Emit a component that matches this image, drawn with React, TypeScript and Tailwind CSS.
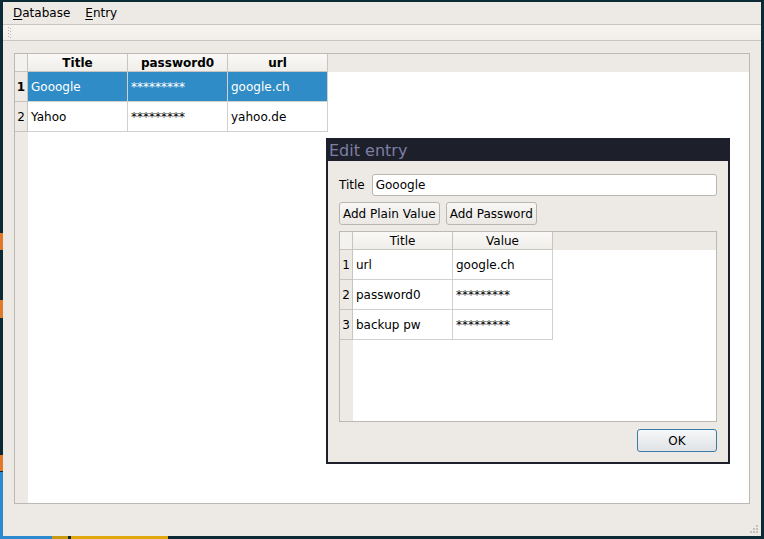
import React from "react";

const font = { fontFamily: '"DejaVu Sans", "Liberation Sans", sans-serif' };

type Col = { title: string; w: string };

function Grid({
  cols,
  rows,
  selected,
  boldHeader,
  className,
}: {
  cols: Col[];
  rows: string[][];
  selected?: number;
  boldHeader?: boolean;
  className?: string;
}) {
  return (
    <div className={`flex flex-col border border-[#bcb8b3] bg-white overflow-hidden ${className ?? ""}`}>
      {/* header row */}
      <div className="flex h-[18px] bg-[#edeae5] shrink-0">
        <div className="w-[13px] border-r border-b border-[#c8c4bf] bg-[#f4f2ef]" />
        {cols.map((c) => (
          <div
            key={c.title}
            className={`${c.w} flex items-center justify-center border-r border-b border-[#c8c4bf] bg-gradient-to-b from-[#faf9f7] to-[#f0eeea] ${
              boldHeader ? "font-bold" : ""
            }`}
          >
            {c.title}
          </div>
        ))}
      </div>
      {rows.map((r, i) => {
        const sel = selected === i;
        return (
          <div key={i} className="flex h-[30px] shrink-0">
            <div
              className={`w-[13px] flex items-center justify-center border-r border-b border-[#c8c4bf] bg-[#edeae5] ${
                sel ? "font-bold" : ""
              }`}
            >
              {i + 1}
            </div>
            {r.map((cell, j) => {
              const pw = cell.startsWith("*");
              return (
                <div
                  key={j}
                  className={`${cols[j].w} flex items-center pl-[3px] border-r border-b border-[#d0d0d0] ${
                    sel ? "bg-[#308cc6] text-white" : "text-black"
                  } ${pw ? (sel ? "text-[#c4dcef]" : "text-[#5a5a5a]") : ""}`}
                >
                  {cell}
                </div>
              );
            })}
          </div>
        );
      })}
      <div className="flex flex-1">
        <div className="w-[13px] bg-[#edeae5]" />
        <div className="flex-1 bg-white" />
      </div>
    </div>
  );
}

export default function App() {
  return (
    <div className="relative w-[764px] h-[539px] bg-[#0c2a35] overflow-hidden text-[12px] text-black" style={font}>
      {/* desktop bits peeking behind window */}
      <div className="absolute left-0 top-[233px] w-[3px] h-[17px] bg-[#e07a2a]" />
      <div className="absolute left-0 top-[300px] w-[3px] h-[18px] bg-[#e07a2a]" />
      <div className="absolute left-0 top-[455px] w-[3px] h-[16px] bg-[#e07a2a]" />
      <div className="absolute left-0 top-[472px] w-[3px] h-[67px] bg-[#2c8ad0]" />
      <div className="absolute left-0 top-[536px] w-[52px] h-[3px] bg-[#2c8ad0]" />
      <div className="absolute left-[52px] top-[536px] w-[16px] h-[3px] bg-[#c89a10]" />
      <div className="absolute left-[71px] top-[536px] w-[97px] h-[3px] bg-[#e0a80c]" />

      {/* main window */}
      <div className="ml-[3px] mr-[3px] mt-[2px] h-[534px] flex flex-col bg-[#edeae5]">
        {/* menu bar */}
        <div className="h-[22px] flex items-center gap-[15px] px-[10px] shrink-0">
          <span>
            <span className="underline underline-offset-2">D</span>atabase
          </span>
          <span>
            <span className="underline underline-offset-2">E</span>ntry
          </span>
        </div>
        {/* toolbar */}
        <div className="h-[17px] shrink-0 border-t border-b border-[#c9c5bf] bg-gradient-to-b from-[#f7f4f0] to-[#f2efeb] flex items-center pl-[5px]">
          <div className="flex gap-[1px]">
            <div className="flex flex-col gap-[2px]">
              {[0, 1, 2, 3].map((i) => (
                <div key={i} className="w-[1px] h-[1px] bg-[#b8b4ae]" />
              ))}
            </div>
            <div className="flex flex-col gap-[2px] mt-[1px]">
              {[0, 1, 2, 3].map((i) => (
                <div key={i} className="w-[1px] h-[1px] bg-[#b8b4ae]" />
              ))}
            </div>
          </div>
        </div>
        {/* central widget */}
        <div className="flex-1 pt-[12px] px-[11px] pb-[10px] flex flex-col">
          <Grid
            className="flex-1"
            boldHeader
            cols={[
              { title: "Title", w: "w-[100px]" },
              { title: "password0", w: "w-[100px]" },
              { title: "url", w: "w-[100px]" },
            ]}
            rows={[
              ["Gooogle", "*********", "google.ch"],
              ["Yahoo", "*********", "yahoo.de"],
            ]}
            selected={0}
          />
        </div>
        {/* status bar */}
        <div className="h-[22px] shrink-0 flex justify-end items-end pr-[3px] pb-[3px]">
          <div className="grid grid-cols-3 gap-[1px] w-[8px] h-[8px]">
            {[0, 0, 1, 0, 1, 1, 1, 1, 1].map((v, i) => (
              <div key={i} className={`w-[2px] h-[2px] ${v ? "bg-[#c4c0ba]" : ""}`} />
            ))}
          </div>
        </div>
      </div>

      {/* Edit entry dialog */}
      <div className="absolute left-[326px] top-[138px] w-[404px] h-[326px] border-2 border-[#1d1f2b] bg-[#edeae5] flex flex-col">
        <div className="h-[21px] bg-[#1d1f2b] text-[#7d7fa3] text-[16px] leading-[21px] pl-[1px] shrink-0">Edit entry</div>
        <div className="flex-1 flex flex-col px-[11px] pt-[13px] pb-[11px] gap-[6px]">
          <div className="flex items-center gap-[7px] h-[22px]">
            <span>Title</span>
            <div className="flex-1 h-[22px] bg-white border border-[#b9b5af] rounded-[3px] flex items-center pl-[3px]">Gooogle</div>
          </div>
          <div className="flex gap-[6px] h-[23px]">
            <div className="px-[3px] border border-[#b9b5af] rounded-[3px] bg-gradient-to-b from-[#f8f7f5] to-[#ebe8e4] flex items-center">Add Plain Value</div>
            <div className="px-[3px] border border-[#b9b5af] rounded-[3px] bg-gradient-to-b from-[#f8f7f5] to-[#ebe8e4] flex items-center">Add Password</div>
          </div>
          <Grid
            className="h-[191px]"
            cols={[
              { title: "Title", w: "w-[100px]" },
              { title: "Value", w: "w-[100px]" },
            ]}
            rows={[
              ["url", "google.ch"],
              ["password0", "*********"],
              ["backup pw", "*********"],
            ]}
          />
          <div className="flex justify-end mt-[1px]">
            <div className="w-[80px] h-[23px] border border-[#3a7aa8] rounded-[3px] bg-gradient-to-b from-[#f6f7f8] to-[#dfe3e6] flex items-center justify-center">OK</div>
          </div>
        </div>
      </div>
    </div>
  );
}
